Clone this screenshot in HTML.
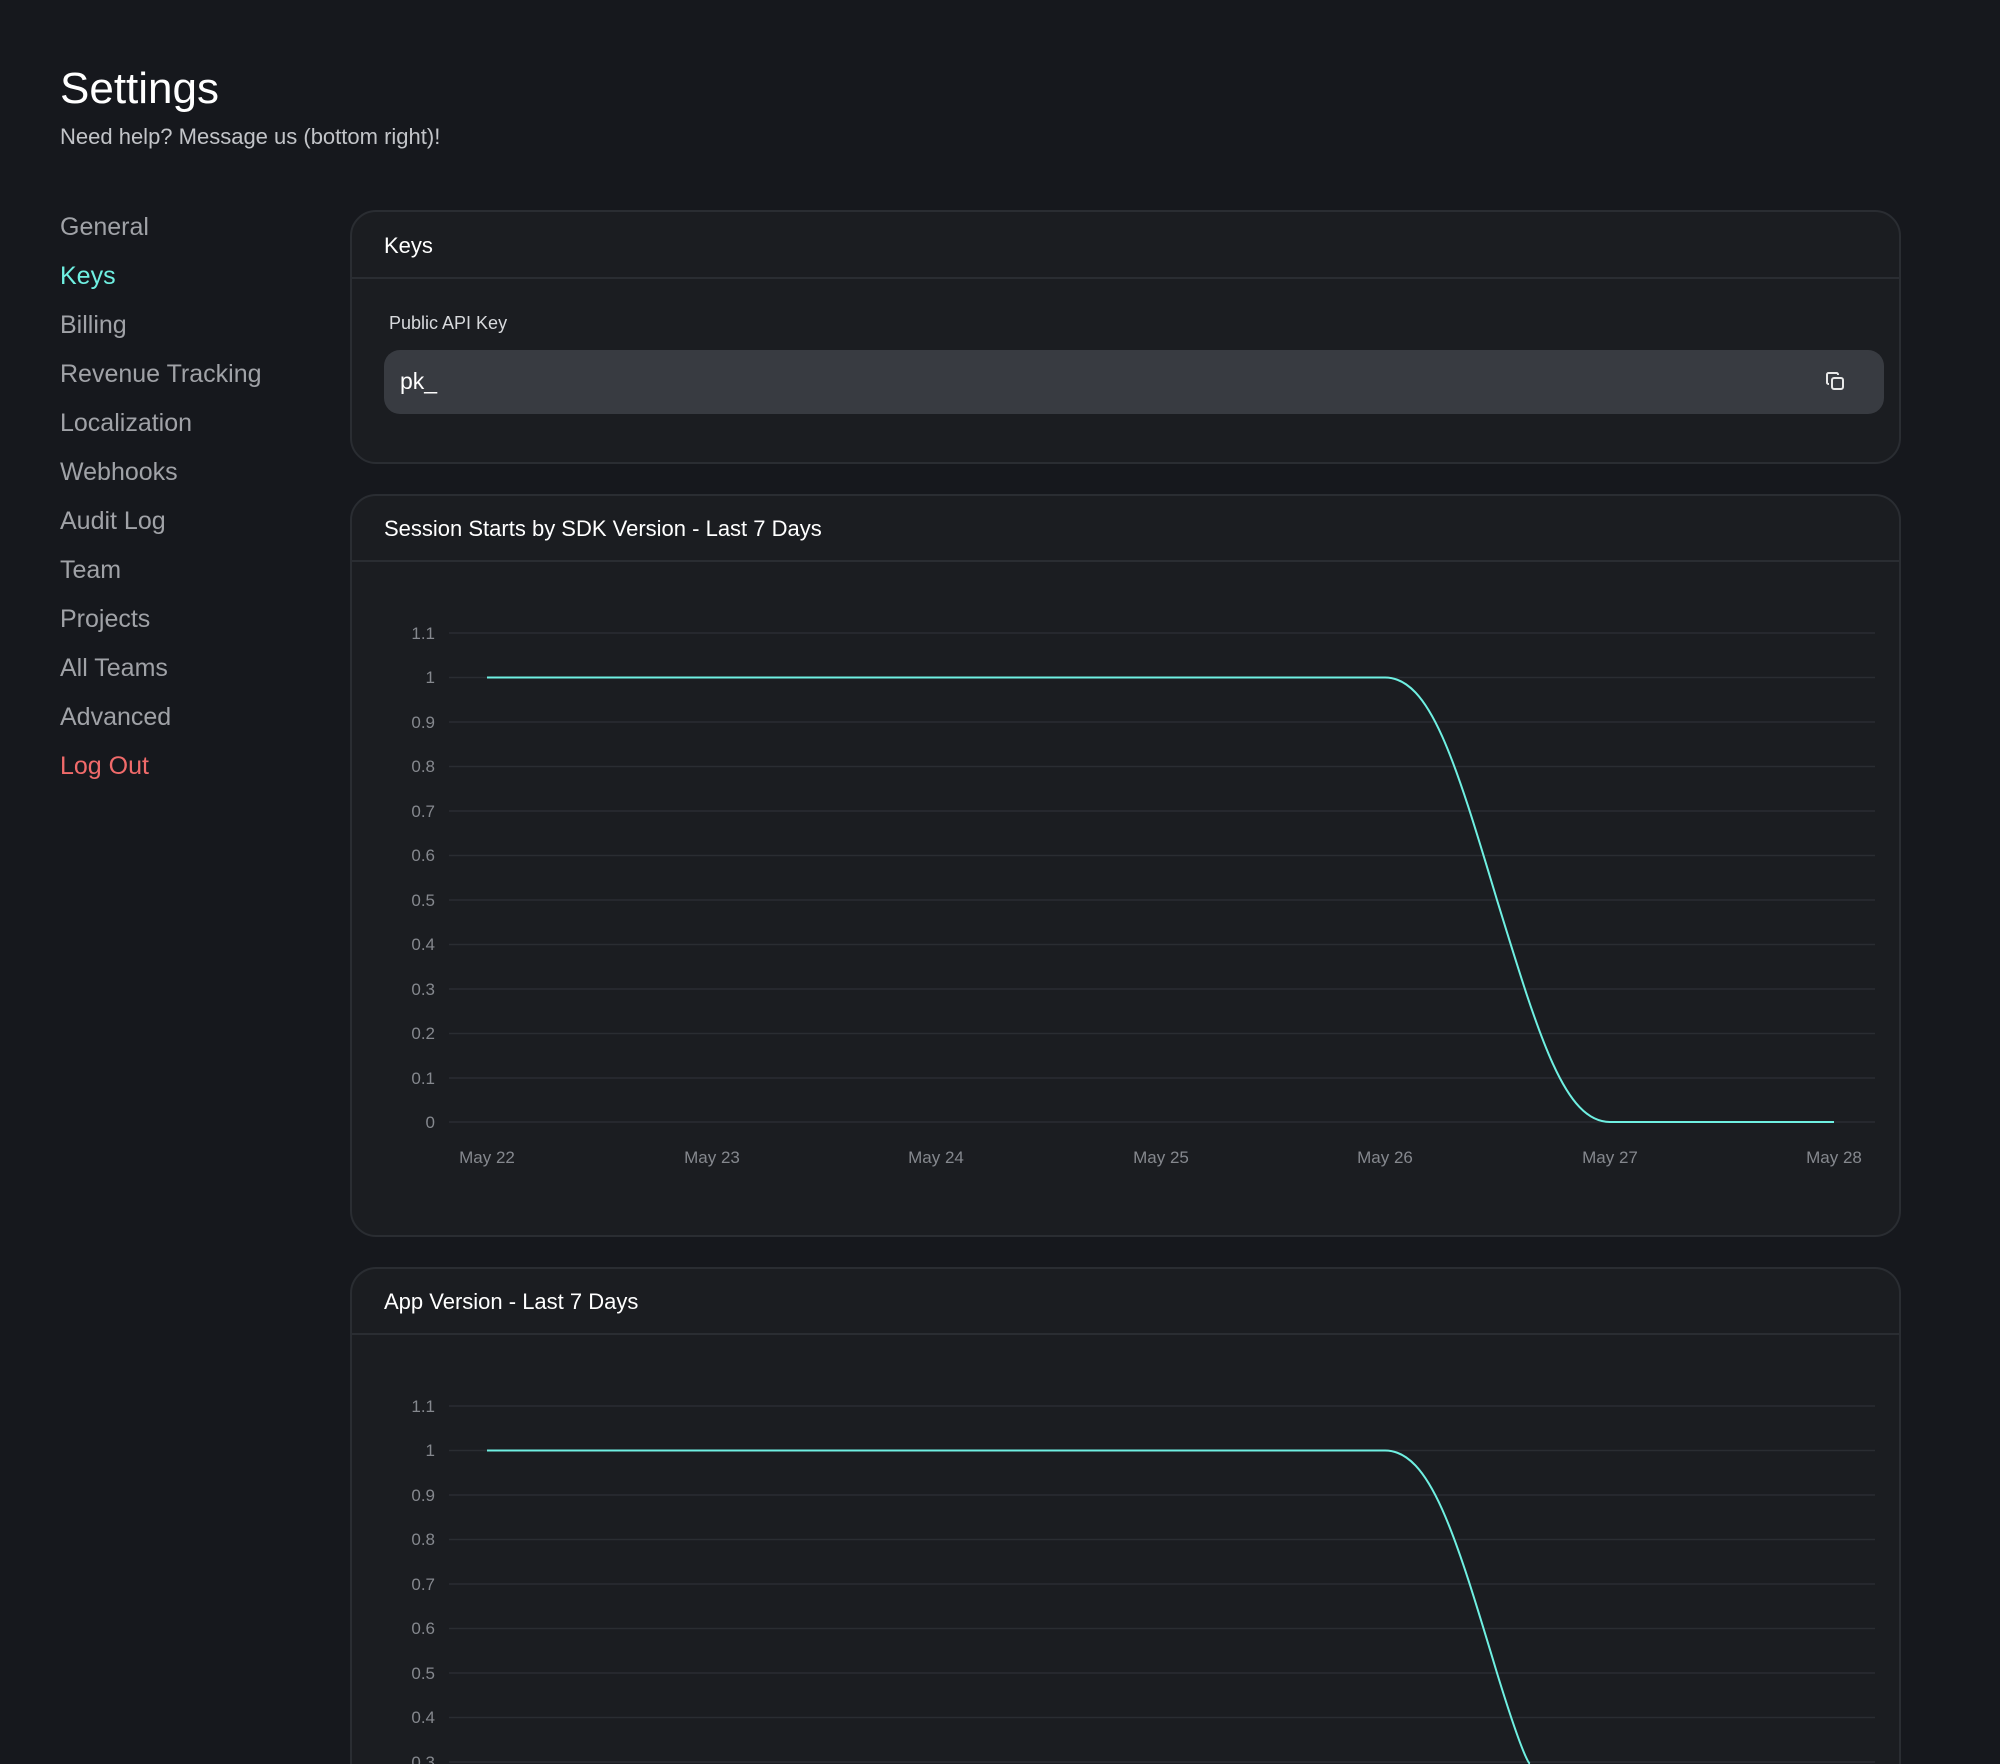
<!DOCTYPE html>
<html><head><meta charset="utf-8"><style>
*{margin:0;padding:0;box-sizing:border-box}
html,body{width:2000px;height:1764px;overflow:hidden;background:#16181d;font-family:"Liberation Sans",sans-serif}
#root{position:relative;width:2000px;height:1764px;overflow:hidden}
.abs{position:absolute}
h1{position:absolute;left:60px;top:64px;font-size:44px;font-weight:normal;color:#fff}
.sub{left:60px;top:124px;font-size:22px;color:#c2c4c8}
.nav{left:60px;font-size:25px;color:#a0a2a7}
.card{position:absolute;left:350px;width:1551px;background:#1b1d21;border:2px solid #2a2d32;border-radius:26px}
.hd{position:absolute;left:32px;font-size:22px;color:#fff}
.div{position:absolute;left:0;right:0;height:2px;background:#2a2d32}
</style></head><body><div id="root">
<h1>Settings</h1>
<div class="abs sub">Need help? Message us (bottom right)!</div>
<div class="abs nav" style="top:213px">General</div>
<div class="abs nav" style="top:262px;color:#6ff0e2">Keys</div>
<div class="abs nav" style="top:311px">Billing</div>
<div class="abs nav" style="top:360px">Revenue Tracking</div>
<div class="abs nav" style="top:409px">Localization</div>
<div class="abs nav" style="top:458px">Webhooks</div>
<div class="abs nav" style="top:507px">Audit Log</div>
<div class="abs nav" style="top:556px">Team</div>
<div class="abs nav" style="top:605px">Projects</div>
<div class="abs nav" style="top:654px">All Teams</div>
<div class="abs nav" style="top:703px">Advanced</div>
<div class="abs nav" style="top:752px;color:#f06a6a">Log Out</div>

<div class="card" style="top:210px;height:254px">
 <div class="hd" style="top:21px">Keys</div>
 <div class="div" style="top:65px"></div>
 <div class="abs" style="left:37px;top:101px;font-size:18px;color:#d8dadd">Public API Key</div>
 <div class="abs" style="left:32px;top:138px;width:1500px;height:64px;background:#383b41;border-radius:16px">
  <div class="abs" style="left:16px;top:18px;font-size:23px;color:#fff">pk_</div>
  <svg class="abs" style="left:1441px;top:21px" width="22" height="22" viewBox="0 0 22 22" fill="none" stroke="#e8e8e8" stroke-width="2"><path d="M4 13 H3.5 A1.5 1.5 0 0 1 2 11.5 V3.5 A1.5 1.5 0 0 1 3.5 2 H11.5 A1.5 1.5 0 0 1 13 3.5 V4"/><rect x="7" y="7" width="11" height="11" rx="2"/></svg>
 </div>
</div>

<div class="card" style="top:494px;height:743px">
 <div class="hd" style="top:20px">Session Starts by SDK Version - Last 7 Days</div>
 <div class="div" style="top:64px"></div>
</div>
<div class="card" style="top:1267px;height:497px;border-bottom:none;border-radius:26px 26px 0 0">
 <div class="hd" style="top:20px">App Version - Last 7 Days</div>
 <div class="div" style="top:64px"></div>
</div>

<svg class="abs" style="left:0;top:0" width="2000" height="1764" font-family="Liberation Sans, sans-serif" font-size="17" fill="#85888e">
<g stroke="#2a2d32" stroke-width="1.5">
<line x1="449" x2="1875" y1="633" y2="633"/><line x1="449" x2="1875" y1="677.5" y2="677.5"/><line x1="449" x2="1875" y1="722" y2="722"/><line x1="449" x2="1875" y1="766.5" y2="766.5"/><line x1="449" x2="1875" y1="811" y2="811"/><line x1="449" x2="1875" y1="855.5" y2="855.5"/><line x1="449" x2="1875" y1="900" y2="900"/><line x1="449" x2="1875" y1="944.5" y2="944.5"/><line x1="449" x2="1875" y1="989" y2="989"/><line x1="449" x2="1875" y1="1033.5" y2="1033.5"/><line x1="449" x2="1875" y1="1078" y2="1078"/><line x1="449" x2="1875" y1="1122" y2="1122"/>
<line x1="449" x2="1875" y1="1406" y2="1406"/><line x1="449" x2="1875" y1="1450.5" y2="1450.5"/><line x1="449" x2="1875" y1="1495" y2="1495"/><line x1="449" x2="1875" y1="1539.5" y2="1539.5"/><line x1="449" x2="1875" y1="1584" y2="1584"/><line x1="449" x2="1875" y1="1628.5" y2="1628.5"/><line x1="449" x2="1875" y1="1673" y2="1673"/><line x1="449" x2="1875" y1="1717.5" y2="1717.5"/><line x1="449" x2="1875" y1="1762" y2="1762"/>
</g>
<g text-anchor="end">
<text x="435" y="639">1.1</text><text x="435" y="683">1</text><text x="435" y="728">0.9</text><text x="435" y="772">0.8</text><text x="435" y="817">0.7</text><text x="435" y="861">0.6</text><text x="435" y="906">0.5</text><text x="435" y="950">0.4</text><text x="435" y="995">0.3</text><text x="435" y="1039">0.2</text><text x="435" y="1084">0.1</text><text x="435" y="1128">0</text>
<text x="435" y="1412">1.1</text><text x="435" y="1456">1</text><text x="435" y="1501">0.9</text><text x="435" y="1545">0.8</text><text x="435" y="1590">0.7</text><text x="435" y="1634">0.6</text><text x="435" y="1679">0.5</text><text x="435" y="1723">0.4</text><text x="435" y="1768">0.3</text>
</g>
<g text-anchor="middle">
<text x="487" y="1163">May 22</text><text x="712" y="1163">May 23</text><text x="936" y="1163">May 24</text><text x="1161" y="1163">May 25</text><text x="1385" y="1163">May 26</text><text x="1610" y="1163">May 27</text><text x="1834" y="1163">May 28</text>
</g>
<g fill="none" stroke="#6ff0e2" stroke-width="2">
<path d="M487 677.5 H1385 C1430 677.5 1455 760 1497 900 C1540 1040 1565 1122 1610 1122 H1834"/>
<path d="M487 1450.5 H1385 C1430 1450.5 1455 1533 1497 1673 C1525 1764 1530 1764 1530 1764"/>
</g>
</svg>
</div></body></html>
